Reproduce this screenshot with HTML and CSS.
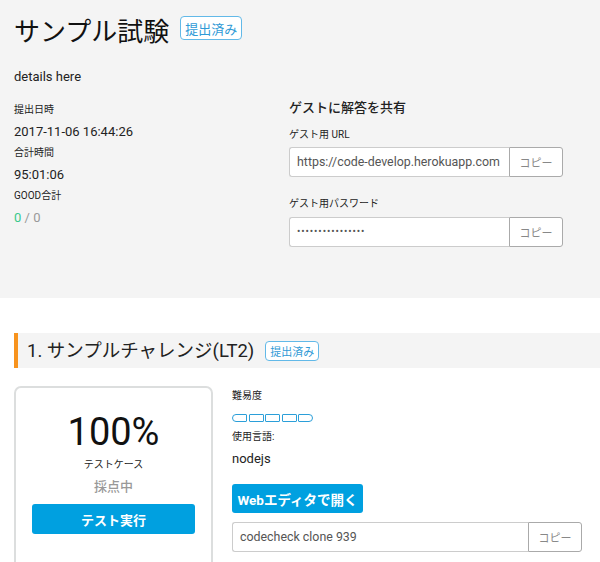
FILE: index.html
```html
<!DOCTYPE html>
<html lang="ja">
<head>
<meta charset="utf-8">
<title>サンプル試験</title>
<link rel="stylesheet" href="styles.css">
</head>
<body>
<section class="top">
  <div class="title-row">
    <h1 class="title">サンプル試験</h1>
    <span class="badge badge-lg">提出済み</span>
  </div>
  <p class="details">details here</p>
  <div class="info-grid">
    <div class="info-left">
      <div class="label">提出日時</div>
      <div class="value">2017-11-06 16:44:26</div>
      <div class="label">合計時間</div>
      <div class="value">95:01:06</div>
      <div class="label">GOOD合計</div>
      <div class="value"><span class="good">0</span><span class="muted"> / 0</span></div>
    </div>
    <div class="info-right">
      <div class="share-title">ゲストに解答を共有</div>
      <div class="label label-share">ゲスト用 URL</div>
      <div class="input-group">
        <div class="input">https://code-develop.herokuapp.com</div>
        <button class="copy">コピー</button>
      </div>
      <div class="label label-share label-gap">ゲスト用パスワード</div>
      <div class="input-group">
        <div class="input input-pass">••••••••••••••••</div>
        <button class="copy">コピー</button>
      </div>
    </div>
  </div>
</section>
<section class="challenge">
  <div class="ch-header">
    <h2 class="ch-title">1. サンプルチャレンジ(LT2)</h2>
    <span class="badge badge-sm">提出済み</span>
  </div>
  <div class="ch-body">
    <div class="card">
      <div class="percent">100%</div>
      <div class="card-label">テストケース</div>
      <div class="card-status">採点中</div>
      <button class="btn btn-run">テスト実行</button>
    </div>
    <div class="ch-info">
      <div class="label">難易度</div>
      <div class="difficulty">
        <span class="dbox dbox-first"></span><span class="dbox"></span><span class="dbox"></span><span class="dbox"></span><span class="dbox dbox-last"></span>
      </div>
      <div class="label">使用言語:</div>
      <div class="value lang">nodejs</div>
      <button class="btn btn-editor">Webエディタで開く</button>
      <div class="input-group wide">
        <div class="input">codecheck clone 939</div>
        <button class="copy">コピー</button>
      </div>
    </div>
  </div>
</section>
</body>
</html>
```
FILE: styles.css
```css
* { box-sizing: border-box; }
html, body {
  margin: 0;
  padding: 0;
  background: #fff;
  font-family: Roboto, "Noto Sans CJK JP", sans-serif;
  color: #222;
}
.top {
  background: #f4f4f4;
  padding: 14px 37px 51px 14px;
}
.title-row {
  display: flex;
  align-items: flex-start;
  gap: 11px;
}
.title {
  margin: 0;
  font-size: 26px;
  font-weight: 400;
  line-height: 36px;
  color: #111;
}
.badge {
  display: inline-flex;
  align-items: center;
  justify-content: center;
  border: 1.5px solid #62b9e8;
  color: #2f9ad6;
  border-radius: 4px;
  background: #fff;
  white-space: nowrap;
}
.badge-lg {
  margin-top: 2px;
  height: 24px;
  padding: 0 4px;
  font-size: 13px;
}
.badge-sm {
  height: 20px;
  padding: 0 4px;
  font-size: 11px;
}
.details {
  margin: 18px 0 0;
  font-size: 13px;
  line-height: 18px;
}
.info-grid {
  margin-top: 12px;
  display: grid;
  grid-template-columns: 275px 274px;
}
.info-left { padding-top: 5px; }
.label {
  font-size: 10px;
  line-height: 14px;
  margin-bottom: 6px;
}
.value {
  font-size: 13px;
  line-height: 18px;
  margin-bottom: 5px;
}
.good { color: #38c98b; }
.muted { color: #999; }
.share-title {
  margin-top: 1px;
  font-size: 13px;
  line-height: 18px;
  font-weight: 500;
  margin-bottom: 11px;
}
.label-share { margin-bottom: 5px; }
.label-gap { margin-top: 20px; margin-bottom: 6px; }
.input-group {
  display: flex;
  height: 30px;
}
.input {
  flex: 1;
  min-width: 0;
  background: #fff;
  border: 1px solid #ccc;
  border-right: none;
  border-radius: 3px 0 0 3px;
  padding: 0 7px;
  font-size: 12.4px;
  line-height: 28px;
  color: #555;
  white-space: nowrap;
  overflow: hidden;
}
.input-pass {
  font-size: 10px;
  letter-spacing: 0.9px;
  color: #555;
}
.copy {
  width: 54px;
  flex: none;
  background: #fff;
  border: 1px solid #aaa;
  border-radius: 0 3px 3px 0;
  font-family: inherit;
  font-size: 11px;
  color: #888;
  padding: 0;
}
.challenge {
  padding: 35px 18px 0 14px;
}
.ch-header {
  display: flex;
  align-items: center;
  gap: 11px;
  height: 35px;
  margin-right: -18px;
  background: #f4f4f4;
  border-left: 4px solid #f7931e;
  padding-left: 9px;
}
.ch-title {
  margin: 0;
  font-size: 18.5px;
  font-weight: 400;
  line-height: 26px;
  color: #222;
}
.ch-body {
  display: flex;
  gap: 19px;
  margin-top: 18px;
}
.card {
  width: 199px;
  height: 200px;
  flex: none;
  border: 2px solid #dcdede;
  border-radius: 7px;
  padding: 24px 16px 0;
  text-align: center;
}
.percent {
  font-size: 38px;
  line-height: 40px;
  color: #111;
}
.card-label {
  margin-top: 6px;
  font-size: 10px;
  line-height: 14px;
}
.card-status {
  margin-top: 6px;
  font-size: 13px;
  line-height: 18px;
  color: #999;
  font-weight: 500;
}
.btn {
  border: none;
  background: #00a0e0;
  color: #fff;
  font-family: inherit;
  font-weight: 700;
  border-radius: 3px;
  padding: 0;
}
.btn-run {
  margin-top: 8px;
  width: 100%;
  height: 30px;
  font-size: 13px;
}
.ch-info {
  flex: 1;
  padding-top: 3px;
}
.difficulty {
  display: flex;
  gap: 1.6px;
  margin: 11px 0 8px;
}
.dbox {
  width: 15px;
  height: 8px;
  border: 1.5px solid #2b9fd9;
  border-radius: 1px;
}
.dbox-first { border-radius: 4px 1px 1px 4px; }
.dbox-last { border-radius: 1px 4px 4px 1px; }
.lang { margin-top: 0; }
.btn-editor {
  display: block;
  margin-top: 16px;
  width: 131px;
  height: 29px;
  font-size: 13.5px;
}
.wide { margin-top: 9px; }
```
